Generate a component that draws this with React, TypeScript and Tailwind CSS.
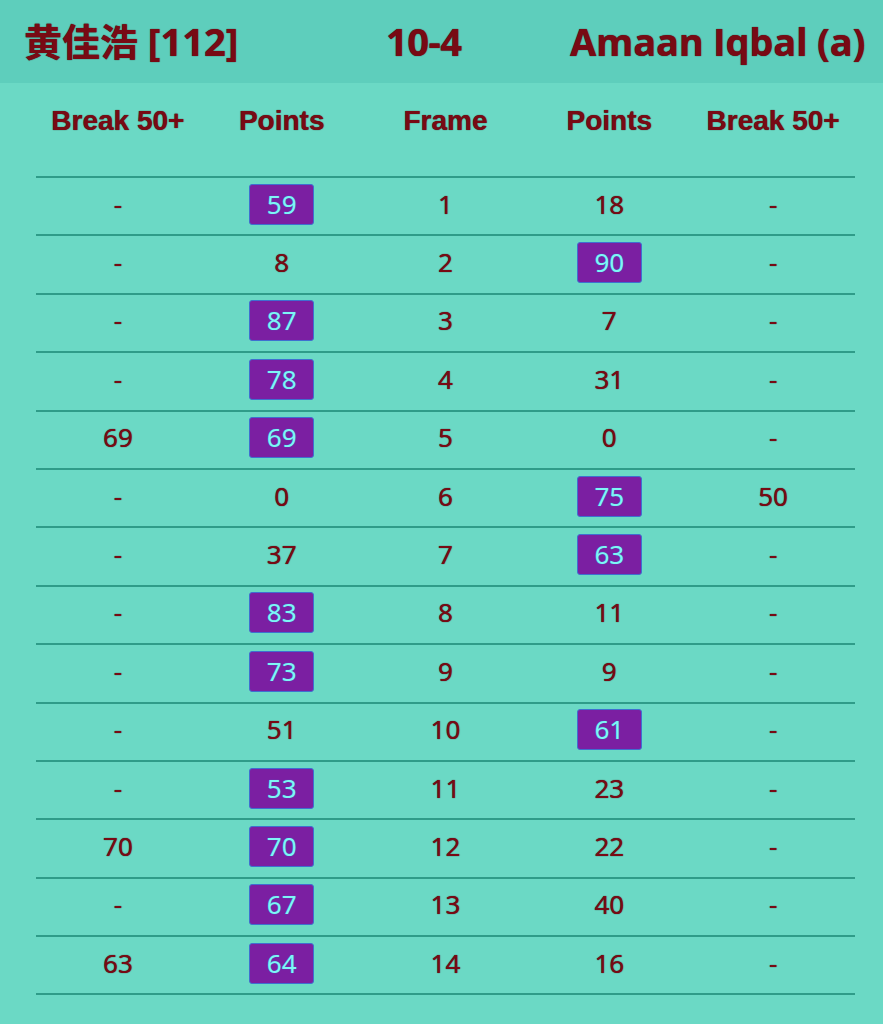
import React from "react";

type Row = { b1: string; p1: number; f: number; p2: number; b2: string };

const rows: Row[] = [
  { b1: "-", p1: 59, f: 1, p2: 18, b2: "-" },
  { b1: "-", p1: 8, f: 2, p2: 90, b2: "-" },
  { b1: "-", p1: 87, f: 3, p2: 7, b2: "-" },
  { b1: "-", p1: 78, f: 4, p2: 31, b2: "-" },
  { b1: "69", p1: 69, f: 5, p2: 0, b2: "-" },
  { b1: "-", p1: 0, f: 6, p2: 75, b2: "50" },
  { b1: "-", p1: 37, f: 7, p2: 63, b2: "-" },
  { b1: "-", p1: 83, f: 8, p2: 11, b2: "-" },
  { b1: "-", p1: 73, f: 9, p2: 9, b2: "-" },
  { b1: "-", p1: 51, f: 10, p2: 61, b2: "-" },
  { b1: "-", p1: 53, f: 11, p2: 23, b2: "-" },
  { b1: "70", p1: 70, f: 12, p2: 22, b2: "-" },
  { b1: "-", p1: 67, f: 13, p2: 40, b2: "-" },
  { b1: "63", p1: 64, f: 14, p2: 16, b2: "-" },
];

function Pts({ v, win }: { v: number; win: boolean }) {
  if (!win) return <span>{v}</span>;
  return (
    <span
      className="inline-flex h-[41px] w-[65px] items-center justify-center rounded-[3px] border border-[#3f6fd0] bg-[#7b1fa2] text-[#7ff5f5]"
      style={{ textShadow: "0 0 1px #2a8fd0" }}
    >
      {v}
    </span>
  );
}

export default function App() {
  const cell = "flex items-center justify-center";
  return (
    <div className="min-h-[1024px] w-[883px] bg-[#6bd9c5] text-[#780a14]">
      <div
        className="flex h-[83px] items-center bg-[#5ecebc] pl-[24px] text-[38px] font-bold"
        style={{ fontFamily: '"Open Sans", "Noto Sans CJK SC", sans-serif', textShadow: "0 0 1px #3a0008" }}
      >
        <div className="w-[362px]">黄佳浩 [112]</div>
        <div className="w-[184px] tracking-[-0.5px]">10-4</div>
        <div className="tracking-[-0.2px]">Amaan Iqbal (a)</div>
      </div>
      <div className="pl-[36px] pr-[28px]">
        <div
          className="grid h-[93px] grid-cols-5 items-center pb-[18px] text-[28px] font-bold"
          style={{ fontFamily: '"Liberation Sans", Arial, sans-serif', textShadow: "0 0 1px #3a0008" }}
        >
          <div className="text-center">Break 50+</div>
          <div className="text-center">Points</div>
          <div className="text-center">Frame</div>
          <div className="text-center">Points</div>
          <div className="text-center">Break 50+</div>
        </div>
        <div
          className="border-t-2 border-[#2f9c89] text-[26px]"
          style={{ fontFamily: '"Noto Sans", sans-serif', textShadow: "0 0 1px #3a0008" }}
        >
          {rows.map((r) => (
            <div key={r.f} className="grid h-[58.4px] grid-cols-5 border-b-2 border-[#2f9c89] pb-[4px]">
              <div className={cell}>{r.b1}</div>
              <div className={cell}>
                <Pts v={r.p1} win={r.p1 > r.p2} />
              </div>
              <div className={cell}>{r.f}</div>
              <div className={cell}>
                <Pts v={r.p2} win={r.p2 > r.p1} />
              </div>
              <div className={cell}>{r.b2}</div>
            </div>
          ))}
        </div>
      </div>
    </div>
  );
}
